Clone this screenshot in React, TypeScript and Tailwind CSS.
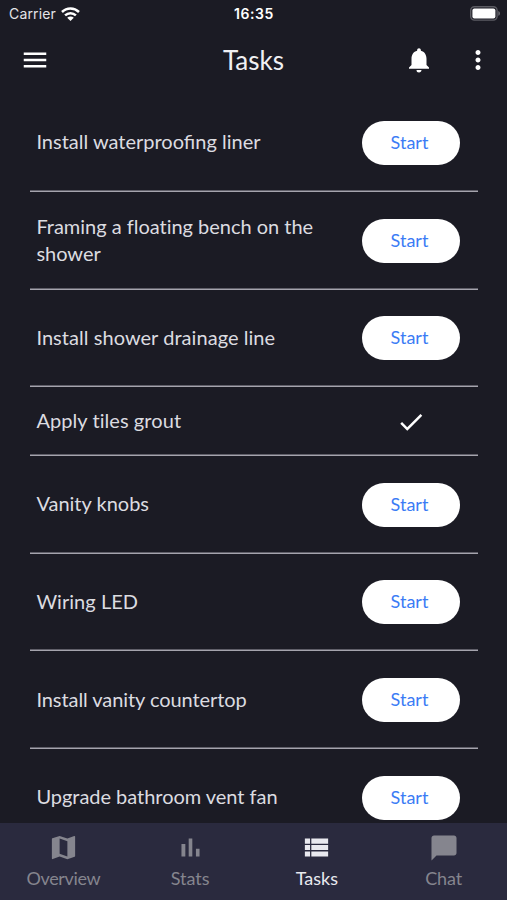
import { MdChatBubble, MdCheck, MdMap, MdMenu, MdMoreVert, MdNotifications } from 'react-icons/md'

const tasks = [
  { title: 'Install waterproofing liner', done: false, tracking: 'tracking-normal' },
  { title: 'Framing a floating bench on the shower', done: false, tracking: 'tracking-[-0.02px]' },
  { title: 'Install shower drainage line', done: false, tracking: 'tracking-[0.05px]' },
  { title: 'Apply tiles grout', done: true, tracking: 'tracking-[0.07px]' },
  { title: 'Vanity knobs', done: false, tracking: 'tracking-normal' },
  { title: 'Wiring LED', done: false, tracking: 'tracking-[0.05px]' },
  { title: 'Install vanity countertop', done: false, tracking: 'tracking-[-0.07px]' },
  { title: 'Upgrade bathroom vent fan', done: false, tracking: 'tracking-[-0.03px]' },
]

function WifiIcon() {
  return (
    <svg width="19" height="14" viewBox="0 0 19 14" fill="none" stroke="white" strokeWidth="2.5">
      <path d="M1 5C5.8.3 13.2.3 18 5" />
      <path d="M4.1 8.4c3.1-3 7.7-3 10.8 0" />
      <path d="M9.5 14 6.2 10.8c1.9-1.7 4.7-1.7 6.6 0z" fill="white" stroke="none" />
    </svg>
  )
}

function BatteryIcon() {
  return (
    <svg width="31" height="15" viewBox="0 0 31 15">
      <rect x=".7" y=".7" width="26.4" height="13.4" rx="3.8" fill="none" stroke="#5c5c63" strokeWidth="1.4" />
      <rect x="2.4" y="2.4" width="23" height="10" rx="2" fill="white" />
      <path d="M28.4 5v4.8c2-.8 2-4 0-4.8z" fill="#77777d" />
    </svg>
  )
}

function ChartIcon() {
  return (
    <svg width="31" height="31" viewBox="0 0 24 24" fill="currentColor">
      <path d="M5 9.2h3V19H5zM10.6 5h2.8v14h-2.8zM16.2 13H19v6h-2.8z" />
    </svg>
  )
}

function ListIcon() {
  return (
    <svg width="31" height="31" viewBox="0 0 24 24" fill="currentColor">
      <path d="M3 14h4v-4H3v4zm0 5h4v-4H3v4zM3 9h4V5H3v4zm5 5h13v-4H8v4zm0 5h13v-4H8v4zM8 5v4h13V5H8z" />
    </svg>
  )
}

const tabs = [
  { label: 'Overview', icon: <MdMap size={31} />, active: false, tracking: 'tracking-[-0.35px]' },
  { label: 'Stats', icon: <ChartIcon />, active: false, tracking: 'tracking-normal' },
  { label: 'Tasks', icon: <ListIcon />, active: true, tracking: 'tracking-normal' },
  { label: 'Chat', icon: <MdChatBubble size={30} />, active: false, tracking: 'tracking-[-0.1px]' },
]

export default function App() {
  return (
    <div className="flex h-[900px] w-[507px] flex-col overflow-hidden bg-[#1b1b24] font-['Lato',sans-serif] text-white">
      <div className="grid h-[27px] shrink-0 grid-cols-3 items-center pl-[9px] pr-[6px] font-['Inter',sans-serif] text-[14px]">
        <div className="flex items-center gap-[5px] text-[#e4e4e8]">
          <span className="tracking-[0.15px]">Carrier</span>
          <WifiIcon />
        </div>
        <div className="pr-[2px] text-center font-semibold tracking-[0.6px]">16:35</div>
        <div className="flex justify-end">
          <BatteryIcon />
        </div>
      </div>

      <header className="grid h-[66px] shrink-0 grid-cols-3 items-center pl-5 pr-[14px]">
        <MdMenu size={30} />
        <h1 className="pb-px pr-[6px] text-center text-[26px] leading-8 text-[#f0f0f3]">Tasks</h1>
        <div className="flex items-center justify-end gap-[29px]">
          <MdNotifications size={30} />
          <MdMoreVert size={30} />
        </div>
      </header>

      <main className="min-h-0 flex-1 overflow-hidden pl-[30px] pr-[29px] pt-px">
        {tasks.map((task) => (
          <div
            key={task.title}
            className={`flex items-center pl-[6.4px] pr-[18.5px] shadow-[inset_0_-1.5px_0_#a5a4ad] ${task.done ? 'h-[68.5px]' : 'h-[97.75px]'}`}
          >
            <p className={`w-[300px] pb-[2px] text-[20px] leading-[27px] text-[#dcdce0] ${task.tracking}`}>
              {task.title}
            </p>
            <div className="ml-auto flex w-[98px] justify-center">
              {task.done ? (
                <MdCheck size={30} />
              ) : (
                <button className="h-[44px] w-full rounded-full bg-white pb-px pr-[2px] text-[18px] text-[#3b7cf5]">
                  Start
                </button>
              )}
            </div>
          </div>
        ))}
      </main>

      <nav className="grid h-[77px] shrink-0 grid-cols-4 bg-[#2a2a3e]">
        {tabs.map((tab) => (
          <div
            key={tab.label}
            className={`flex flex-col items-center pt-[9px] ${tab.active ? 'text-[#e9e9ef]' : 'text-[#85858e]'}`}
          >
            <div className="flex h-[31px] items-center">{tab.icon}</div>
            <span className={`mt-[3px] text-[18px] leading-6 ${tab.tracking}`}>{tab.label}</span>
          </div>
        ))}
      </nav>
    </div>
  )
}
